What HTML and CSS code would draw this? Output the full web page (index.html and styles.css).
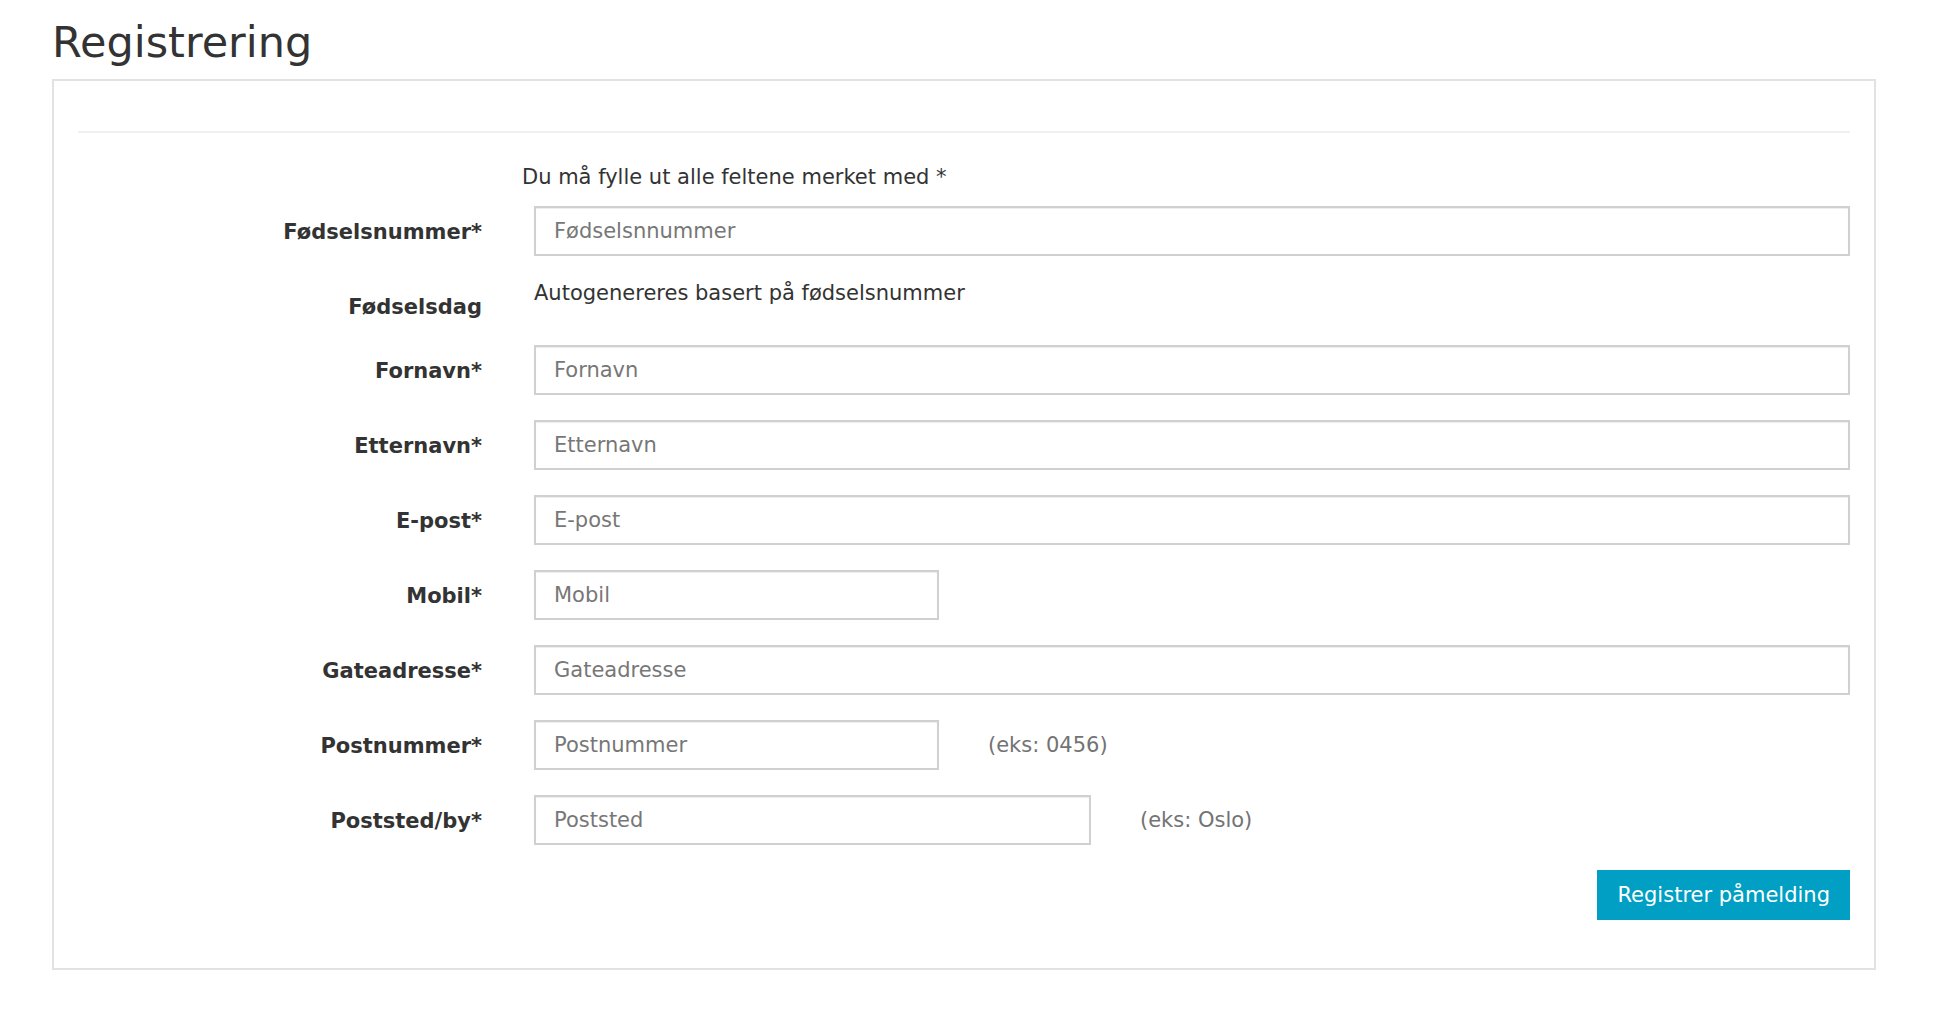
FILE: index.html
```html
<!DOCTYPE html>
<html lang="no">
<head>
<meta charset="utf-8">
<title>Registrering</title>
<link rel="stylesheet" href="styles.css">
</head>
<body>
<div class="page">
  <h1 class="title">Registrering</h1>
  <div class="card">
    <div class="card-header"></div>
    <form class="form">
      <p class="intro">Du må fylle ut alle feltene merket med *</p>
      <div class="grid">
        <label class="label" for="fnr">Fødselsnummer*</label>
        <div class="field"><input class="input" id="fnr" type="text" placeholder="Fødselsnnummer"></div>

        <label class="label label-static">Fødselsdag</label>
        <div class="field"><p class="static">Autogenereres basert på fødselsnummer</p></div>

        <label class="label" for="fornavn">Fornavn*</label>
        <div class="field"><input class="input" id="fornavn" type="text" placeholder="Fornavn"></div>

        <label class="label" for="etternavn">Etternavn*</label>
        <div class="field"><input class="input" id="etternavn" type="text" placeholder="Etternavn"></div>

        <label class="label" for="epost">E-post*</label>
        <div class="field"><input class="input" id="epost" type="text" placeholder="E-post"></div>

        <label class="label" for="mobil">Mobil*</label>
        <div class="field"><input class="input input-short" id="mobil" type="text" placeholder="Mobil"></div>

        <label class="label" for="gate">Gateadresse*</label>
        <div class="field"><input class="input" id="gate" type="text" placeholder="Gateadresse"></div>

        <label class="label" for="postnr">Postnummer*</label>
        <div class="field"><input class="input input-short" id="postnr" type="text" placeholder="Postnummer"><span class="hint">(eks: 0456)</span></div>

        <label class="label" for="poststed">Poststed/by*</label>
        <div class="field"><input class="input input-medium" id="poststed" type="text" placeholder="Poststed"><span class="hint">(eks: Oslo)</span></div>

        <div class="actions"><button class="btn" type="button">Registrer påmelding</button></div>
      </div>
    </form>
  </div>
</div>
</body>
</html>
```

FILE: styles.css
```css
* { box-sizing: border-box; }

html, body {
  margin: 0;
  padding: 0;
  background: #ffffff;
}

body {
  font-family: "DejaVu Sans", Verdana, sans-serif;
  font-size: 21px;
  line-height: 25px;
  color: #333333;
}

.page {
  padding: 19px 0 0 52px;
}

.title {
  margin: 0 0 14px 0;
  font-size: 43px;
  line-height: 46px;
  font-weight: normal;
  color: #333333;
}

.card {
  width: 1824px;
  border: 2px solid #e2e2e2;
  padding: 0 24px 24px 24px;
}

.card-header {
  height: 52px;
  border-bottom: 2px solid #efefef;
}

.form {
  padding: 32px 0 24px 0;
}

.intro {
  margin: 0 0 16px 444px;
}

.grid {
  display: grid;
  grid-template-columns: 404px 1fr;
  column-gap: 52px;
  row-gap: 25px;
}

.label {
  font-weight: bold;
  text-align: right;
  padding-top: 14px;
  color: #333333;
}

.field {
  display: flex;
  align-items: center;
  gap: 49px;
}

.label-static + .field {
  align-items: flex-start;
}

.static {
  margin: 0;
}

.input {
  width: 100%;
  height: 50px;
  border: 2px solid #d0d0d0;
  border-radius: 0;
  padding: 0 18px;
  font-family: "DejaVu Sans", Verdana, sans-serif;
  font-size: 21px;
  color: #333333;
  background: #ffffff;
  box-shadow: inset 0 1px 1px rgba(0, 0, 0, 0.075);
  outline: none;
}

.input::placeholder {
  color: #777777;
  opacity: 1;
}

.input-short {
  width: 405px;
  flex: none;
}

.input-medium {
  width: 557px;
  flex: none;
}

.hint {
  color: #737373;
  white-space: nowrap;
}

.actions {
  grid-column: 1 / 3;
  display: flex;
  justify-content: flex-end;
}

.btn {
  height: 50px;
  padding: 0 20px;
  border: none;
  border-radius: 0;
  background: #019fc3;
  color: #ffffff;
  font-family: "DejaVu Sans", Verdana, sans-serif;
  font-size: 21px;
  cursor: pointer;
}
```
